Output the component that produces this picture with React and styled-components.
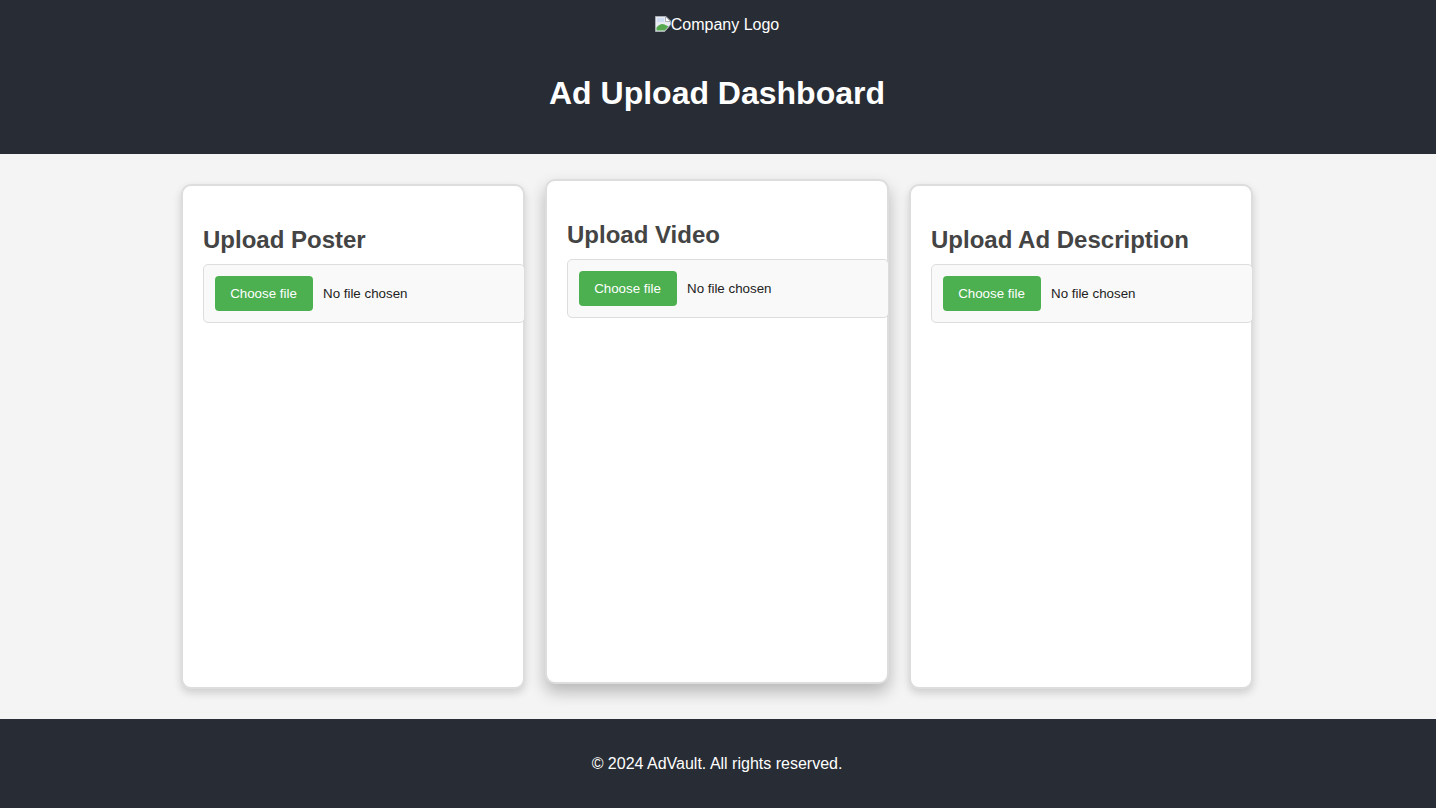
import React from "react";
import styled, { createGlobalStyle } from "styled-components";

const Global = createGlobalStyle`
  html, body { margin: 0; padding: 0; }
  body { font-family: "Liberation Sans", Arial, sans-serif; background: #f4f4f4; color: #333; }
  * { box-sizing: border-box; }
`;
const Page = styled.div`
  display: flex; flex-direction: column; height: 808px; overflow: hidden;
`;
const Header = styled.header`
  height: 154px; background: #282c34; color: #fff; text-align: center;
  padding: 16px 2px 0 0; flex: none;
`;
const Logo = styled.div`
  display: inline-flex; align-items: flex-start; height: 18px; font-size: 16px; line-height: 18px;
`;
const LogoIcon = styled.svg`
  width: 16px; height: 16px; flex: none; display: block;
`;
const Title = styled.h1`
  margin: 39px 0 0; font-size: 32px; line-height: 37px; font-weight: 700;
`;
const Main = styled.main`
  flex: 1; display: flex; justify-content: center; gap: 20px; padding: 30px 2px 30px 0; min-height: 0;
`;
const Card = styled.section`
  width: 344px; background: #fff; border: 2px solid #ddd; border-radius: 10px;
  padding: 20px;
  box-shadow: ${p => p.$raised ? "0 8px 16px rgba(0,0,0,.25)" : "0 4px 8px rgba(0,0,0,.16)"};
  transform: ${p => p.$raised ? "translateY(-5px)" : "none"};
`;
const CardTitle = styled.h2`
  margin: 20px 0 10px; font-size: 24px; line-height: 28px; font-weight: 700; color: #444;
`;
const FileField = styled.div`
  width: 322px; height: 59px; padding: 0 10px 0 10.5px; background: #f9f9f9; border: 1px solid #ddd;
  border-radius: 5px; display: flex; align-items: center; gap: 10.5px;
  font-size: 13.333px; color: #222;
`;
const FileButton = styled.button`
  width: 98px; height: 35px; padding: 0; border: 0; border-radius: 4px;
  background: #4caf50; color: #fff; font: 13.333px "Liberation Sans", Arial, sans-serif;
`;
const Footer = styled.footer`
  height: 89px; flex: none; background: #282c34; color: #fff; font-size: 16px; padding-right: 2px;
  display: flex; align-items: center; justify-content: center;
`;

const BrokenImage = () => (
  <LogoIcon viewBox="0 0 16 16">
    <path d="M0.5 0.5H11L15.5 5V15.5H0.5Z" fill="#e9edf3" stroke="#a9aeb6" />
    <path d="M10.5 0.5V5.5H15.5Z" fill="#fff" stroke="#a9aeb6" />
    <path d="M2 2H9V6H2Z" fill="#cfdcf2" />
    <path d="M1.5 14.5V11.5C4 8.5 7 7 9.5 8.5L13.5 10.5L10 14.5Z" fill="#55a84e" />
    <path d="M9.5 16L16 8.5V16Z" fill="#282c34" />
    <path d="M9.5 15.5L15.5 8.5" stroke="#a9aeb6" />
  </LogoIcon>
);

const cards = [
  { title: "Upload Poster" },
  { title: "Upload Video", raised: true },
  { title: "Upload Ad Description" },
];

export default function App() {
  return (
    <Page>
      <Global />
      <Header>
        <Logo><BrokenImage />Company Logo</Logo>
        <Title>Ad Upload Dashboard</Title>
      </Header>
      <Main>
        {cards.map(c => (
          <Card key={c.title} $raised={c.raised}>
            <CardTitle>{c.title}</CardTitle>
            <FileField>
              <FileButton type="button">Choose file</FileButton>
              <span>No file chosen</span>
            </FileField>
          </Card>
        ))}
      </Main>
      <Footer>© 2024 AdVault. All rights reserved.</Footer>
    </Page>
  );
}
